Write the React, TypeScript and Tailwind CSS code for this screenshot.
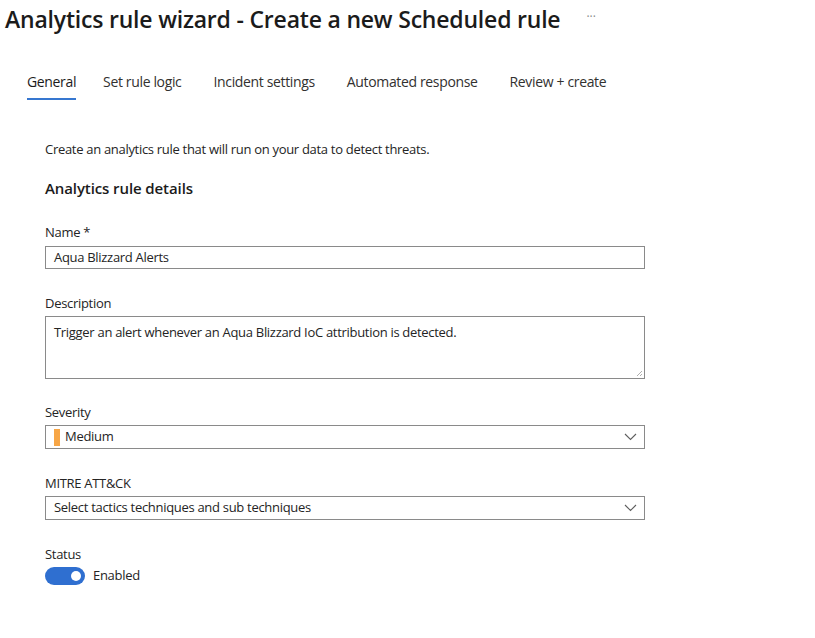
import React from "react";

function Chevron() {
  return (
    <svg width="13" height="8" viewBox="0 0 13 8" fill="none">
      <path d="M1 1l5.5 5.5L12 1" stroke="#5f5f5f" strokeWidth="1.1" />
    </svg>
  );
}

export default function App() {
  const tabs = ["General", "Set rule logic", "Incident settings", "Automated response", "Review + create"];
  return (
    <div className="w-[815px] h-[638px] bg-white text-[#242424] font-['Segoe_UI','Open_Sans',sans-serif]">
      <div className="flex items-center pl-[5px] pt-[3px]">
        <h1 className="text-[23px] font-semibold leading-[32px] text-[#1b1b1b] tracking-[-0.2px]">
          Analytics rule wizard - Create a new Scheduled rule
        </h1>
        <span className="ml-[26px] text-[#8a8a8a] text-[12px] leading-none pb-[4px]">···</span>
      </div>
      <div className="flex pl-[27px] mt-[34px] gap-[32px] text-[14px] text-[#323130] tracking-[-0.35px]">
        {tabs.map((t, i) => (
          <div key={t} className={"flex flex-col " + (i === 0 ? "mr-[-5px]" : "")}>
            <span className={"leading-[26px] " + (i === 0 ? "text-[#1b1b1b]" : "")}>{t}</span>
            <div className={"h-[2px] mt-[3px] " + (i === 0 ? "bg-[#3677d0]" : "bg-transparent")} />
          </div>
        ))}
      </div>
      <div className="pl-[45px] w-[645px] pt-[40px] text-[13px] tracking-[-0.3px]">
        <p className="leading-[18px]">Create an analytics rule that will run on your data to detect threats.</p>
        <h2 className="text-[15px] font-semibold leading-[20px] mt-[20px] text-[#1b1b1b] tracking-[-0.1px]">Analytics rule details</h2>
        <div className="mt-[25px] leading-[18px]">Name *</div>
        <div className="mt-[5px] h-[23px] border border-[#8a8a8a] flex items-center px-[8px]">Aqua Blizzard Alerts</div>
        <div className="mt-[25px] leading-[18px]">Description</div>
        <div className="mt-[4px] h-[63px] border border-[#8a8a8a] px-[8px] pt-[6px] relative">
          Trigger an alert whenever an Aqua Blizzard IoC attribution is detected.
          <svg className="absolute right-[1px] bottom-[1px]" width="7" height="7" viewBox="0 0 7 7">
            <path d="M6 1L1 6M6 4L4 6" stroke="#9a9a9a" strokeWidth="0.8" />
          </svg>
        </div>
        <div className="mt-[24px] leading-[18px]">Severity</div>
        <div className="mt-[4px] h-[24px] border border-[#8a8a8a] flex items-center pl-[8px] pr-[7px]">
          <span className="w-[6px] h-[17px] bg-[#f7a646] mr-[5px]" />
          <span className="flex-1">Medium</span>
          <Chevron />
        </div>
        <div className="mt-[25px] leading-[18px]">MITRE ATT&amp;CK</div>
        <div className="mt-[4px] h-[24px] border border-[#8a8a8a] flex items-center pl-[8px] pr-[7px]">
          <span className="flex-1">Select tactics techniques and sub techniques</span>
          <Chevron />
        </div>
        <div className="mt-[25px] leading-[18px]">Status</div>
        <div className="mt-[3px] flex items-center gap-[8px]">
          <div className="w-[40px] h-[18px] rounded-full bg-[#2f6fd0] flex items-center justify-end pr-[4px]">
            <div className="w-[10px] h-[10px] rounded-full bg-white" />
          </div>
          <span>Enabled</span>
        </div>
      </div>
    </div>
  );
}
